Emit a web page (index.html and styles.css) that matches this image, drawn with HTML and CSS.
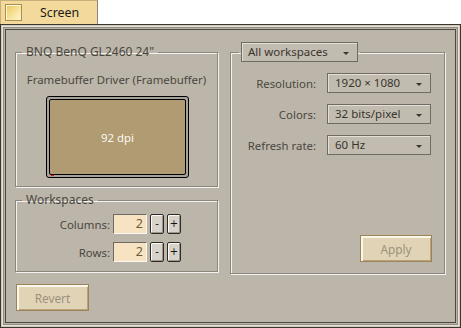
FILE: index.html
```html
<!DOCTYPE html>
<html>
<head>
	<meta charset="utf-8">
	<title>Screen</title>
	<link rel="stylesheet" href="styles.css">
</head>
<body>
	<!-- tab judul jendela -->
	<div class="tab">
		<span class="close-box"></span>
		<span class="title">Screen</span>
	</div>
	<div class="window">
		<div class="content">
			<div class="col-left">
				<fieldset class="box box-monitor">
					<legend>BNQ BenQ GL2460 24"</legend>
					<div class="driver">Framebuffer Driver (Framebuffer)</div>
					<div class="monitor">
						<div class="screen">92 dpi</div>
						<span class="corner"></span>
					</div>
				</fieldset>
				<fieldset class="box box-workspaces">
					<legend>Workspaces</legend>
					<div class="ws-row">
						<label>Columns:</label>
						<span class="num">2</span>
						<button class="spin">-</button>
						<button class="spin">+</button>
					</div>
					<div class="ws-row">
						<label>Rows:</label>
						<span class="num">2</span>
						<button class="spin">-</button>
						<button class="spin">+</button>
					</div>
				</fieldset>
				<button class="btn btn-revert">Revert</button>
			</div>
			<fieldset class="box box-settings">
				<legend><span class="popup popup-ws">All workspaces</span></legend>
				<div class="form">
					<label>Resolution:</label>
					<span class="popup">1920 × 1080</span>
					<label>Colors:</label>
					<span class="popup">32 bits/pixel</span>
					<label>Refresh rate:</label>
					<span class="popup">60 Hz</span>
				</div>
				<div class="actions">
					<button class="btn btn-apply">Apply</button>
				</div>
			</fieldset>
		</div>
	</div>
</body>
</html>
```

FILE: styles.css
```css
* {
	margin: 0;
	padding: 0;
	box-sizing: border-box;
}
body {
	font-family: "Noto Sans", sans-serif;
	font-size: 11.4px;
	color: #38352f;
	background: white;
	width: 461px;
	height: 328px;
	overflow: hidden;
}

/* tab */
.tab {
	display: flex;
	align-items: center;
	width: 98px;
	height: 24px;
	background: #f3d99c;
	border: 1px solid #c7b07a;
	border-right-color: #8d8676;
	border-bottom: 0;
}
.close-box {
	width: 17px;
	height: 17px;
	margin-left: 4px;
	border: 1px solid #a88f50;
	box-shadow: inset 1px 1px 0 #fff8dc;
	background: linear-gradient(135deg, #eac55a, #f8e6a0 60%, #fff4cc);
}
.title {
	margin-left: 18px;
	font-size: 12.4px;
	color: #1c1a16;
}

/* jendela */
.window {
	width: 461px;
	height: 304px;
	border: 1px solid #3a3630;
	box-shadow: inset 0 0 0 1px #cfc9bd, inset 0 0 0 2px #e8e4dc, inset 0 0 0 3px #8f897e;
	padding: 4px;
	background: #bcb6aa;
}
.content {
	display: flex;
	gap: 12px;
	height: 100%;
	padding: 12px 0 0 9px;
	border: 1px solid #4a463e;
	background: #bcb6aa;
}
.col-left {
	display: flex;
	flex-direction: column;
	width: 203px;
}

/* kotak grup */
.box {
	border: 1px solid #8c877e;
	box-shadow: inset 1px 1px 0 #f4f2ee, 1px 1px 0 #f4f2ee;
	min-width: 0;
}
.box legend {
	margin-left: 6px;
	padding: 0 4px;
	font-size: 12px;
	line-height: 16px;
	color: #4a463e;
}
.box-monitor {
	margin-top: 2px;
	padding: 12px 0 8px;
}
.driver {
	text-align: center;
	line-height: 16px;
	color: #4a463e;
}
.monitor {
	position: relative;
	width: 143px;
	height: 82px;
	margin: 8px 0 0 30px;
	padding: 2px;
	border: 1px solid #000;
	border-radius: 3px;
	background: #a7a39b;
}
.screen {
	display: flex;
	align-items: center;
	justify-content: center;
	height: 100%;
	border: 1px solid #000;
	border-radius: 2px;
	background: #b09b72;
	color: #fbf8f0;
}
.corner {
	position: absolute;
	left: 4px;
	bottom: 1px;
	width: 3px;
	height: 1px;
	background: #e01010;
}

.box-workspaces {
	margin-top: 5px;
	padding: 6px 0 9px;
}
.ws-row {
	display: flex;
	align-items: center;
	padding-left: 34px;
}
.ws-row + .ws-row {
	margin-top: 8px;
}
.ws-row label {
	width: 60px;
	text-align: right;
	margin-right: 3px;
	color: #4a463e;
}
.num {
	width: 34px;
	height: 20px;
	padding-right: 3px;
	text-align: right;
	line-height: 18px;
	font-size: 12.5px;
	background: #f7e2c2;
	border: 1px solid;
	border-color: #6f6b63 #fbf9f4 #fbf9f4 #6f6b63;
	color: #6e5a38;
}
.spin {
	width: 14px;
	height: 20px;
	margin-left: 3px;
	border: 1px solid #2e2b27;
	border-radius: 2px;
	background: #d7d3ca;
	box-shadow: inset 1px 1px 0 #fbfaf7, inset -1px -1px 0 #9c978e;
	font-family: "DejaVu Sans", sans-serif;
	font-size: 10px;
	color: #111;
	line-height: 16px;
}

/* tombol */
.btn {
	width: 73px;
	height: 27px;
	border: 1px solid #9c8458;
	background: #e1d4b6;
	box-shadow: inset 2px 2px 0 #fbf6ea, inset -1px -1px 0 #b8a47c;
	font-family: "Noto Sans", sans-serif;
	font-size: 11.8px;
	color: #9c917e;
}
.btn-revert {
	margin-top: 12px;
	margin-left: 1px;
}

/* kotak kanan */
.box-settings {
	width: 215px;
	height: 232px;
	display: flex;
	flex-direction: column;
	padding: 11px 12px 11px 0;
}
.box-settings legend {
	margin-left: 8px;
	padding: 0 2px;
}
.popup {
	position: relative;
	display: block;
	height: 20px;
	padding-left: 7px;
	line-height: 18px;
	font-size: 11.5px;
	color: #38352f;
	background: #c2bcb0;
	border: 1px solid #6f6b63;
	box-shadow: inset 1px 1px 0 #e4e0d8;
}
.popup::after {
	content: "";
	position: absolute;
	right: 8px;
	top: 9px;
	border-left: 3px solid transparent;
	border-right: 3px solid transparent;
	border-top: 3px solid #38352f;
}
.popup-ws {
	width: 117px;
	padding-left: 6px;
}
.form {
	display: grid;
	grid-template-columns: 85px 104px;
	column-gap: 11px;
	row-gap: 11px;
	align-items: center;
}
.form label {
	text-align: right;
	color: #4a463e;
}
.actions {
	margin-top: auto;
	display: flex;
	justify-content: flex-end;
}
.btn-apply {
	width: 72px;
}
```
